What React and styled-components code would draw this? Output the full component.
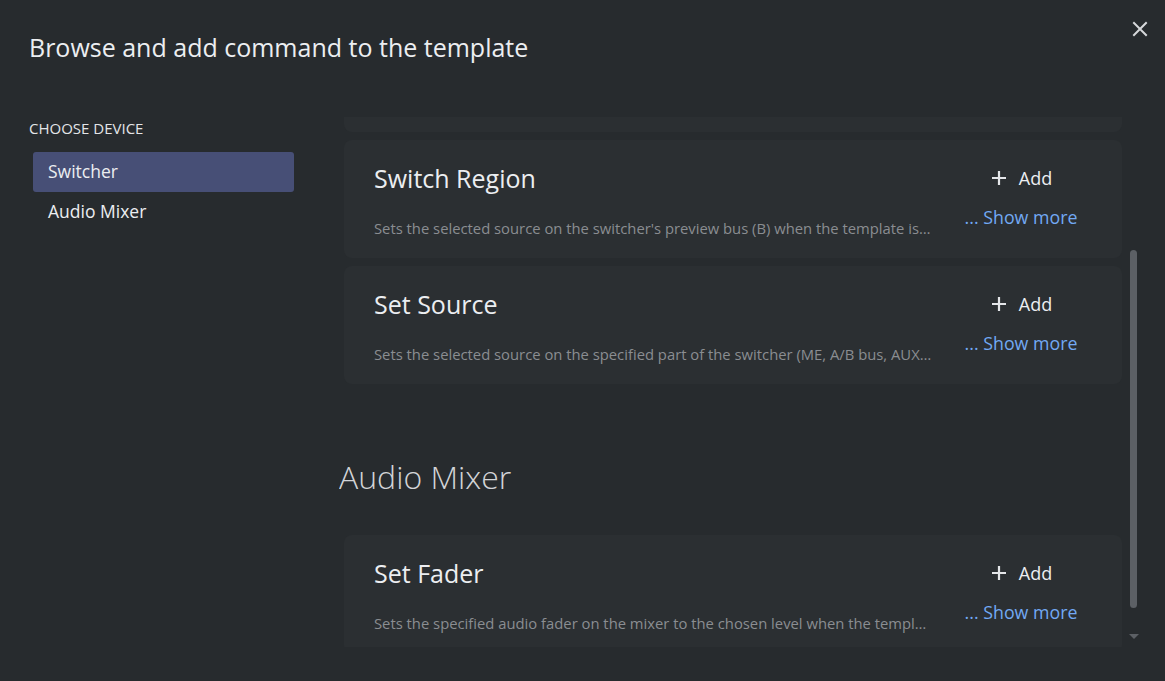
import React from "react";
import styled, { createGlobalStyle } from "styled-components";

const GlobalStyle = createGlobalStyle`
  html, body {
    margin: 0;
    padding: 0;
    background: #272b2e;
  }
  * {
    box-sizing: border-box;
  }
`;

// first switcher entry is scrolled out of view, only its bottom edge shows
const commands = {
  Switcher: [
    { title: "", desc: "" },
    {
      title: "Switch Region",
      desc: "Sets the selected source on the switcher's preview bus (B) when the template is triggered and then performs a cut."
    },
    {
      title: "Set Source",
      desc: "Sets the selected source on the specified part of the switcher (ME, A/B bus, AUX, DSK) when the template is triggered."
    }
  ],
  "Audio Mixer": [
    {
      title: "Set Fader",
      desc: "Sets the specified audio fader on the mixer to the chosen level when the template is triggered."
    }
  ]
};

class App extends React.Component {
  state = {
    device: "Switcher"
  };

  selectDevice = device => {
    this.setState({ device });
  };

  render() {
    return (
      <Modal>
        <GlobalStyle />
        <Header>
          <Title>Browse and add command to the template</Title>
          <CloseButton aria-label="Close">
            <svg width="16" height="16" viewBox="0 0 16 16">
              <path
                d="M2 2 L14 14 M14 2 L2 14"
                stroke="#d6d8db"
                strokeWidth="2"
                strokeLinecap="square"
              />
            </svg>
          </CloseButton>
        </Header>
        <Body>
          <Sidebar>
            <SidebarLabel>Choose device</SidebarLabel>
            <DeviceList>
              {Object.keys(commands).map(name => (
                <DeviceItem
                  key={name}
                  $active={this.state.device === name}
                  onClick={() => this.selectDevice(name)}
                >
                  {name}
                </DeviceItem>
              ))}
            </DeviceList>
          </Sidebar>
          <Main>
            <Viewport>
              <ScrollContent>
                {commands.Switcher.map((cmd, i) => (
                  <CommandCard key={i} {...cmd} />
                ))}
                <SectionHeading>Audio Mixer</SectionHeading>
                {commands["Audio Mixer"].map((cmd, i) => (
                  <CommandCard key={i} {...cmd} />
                ))}
              </ScrollContent>
            </Viewport>
            <ScrollTrack>
              <Thumb />
              <DownArrow />
            </ScrollTrack>
          </Main>
        </Body>
      </Modal>
    );
  }
}

const CommandCard = ({ title, desc }) => {
  if (!title) return <Card />;
  return (
    <Card>
      <CardText>
        <CardTitle>{title}</CardTitle>
        <CardDesc>{desc}</CardDesc>
      </CardText>
      <CardActions>
        <AddButton>
          <svg width="18" height="18" viewBox="0 0 18 18">
            <path
              d="M9 2 V16 M2 9 H16"
              stroke="#e4e6e9"
              strokeWidth="2.2"
            />
          </svg>
          <span>Add</span>
        </AddButton>
        <ShowMore>... Show more</ShowMore>
      </CardActions>
    </Card>
  );
};

export default App;

const Modal = styled.div`
  width: 1165px;
  height: 681px;
  overflow: hidden;
  background: #272b2e;
  font-family: "Open Sans", "Noto Sans", sans-serif;
  color: #e8eaed;
`;

const Header = styled.div`
  display: flex;
  justify-content: space-between;
  align-items: flex-start;
  padding: 0 17px 0 29px;
`;

const Title = styled.h1`
  margin: 30px 0 0;
  font-size: 25px;
  font-weight: 400;
  line-height: 34px;
  color: #eceef1;
`;

const CloseButton = styled.button`
  margin-top: 21px;
  padding: 0;
  border: 0;
  background: none;
  width: 16px;
  height: 16px;
  cursor: pointer;
  display: flex;
`;

const Body = styled.div`
  display: flex;
  margin-top: 53px;
`;

const Sidebar = styled.div`
  width: 339px;
  flex-shrink: 0;
  padding: 1px 45px 0 29px;
`;

const SidebarLabel = styled.div`
  font-size: 15px;
  line-height: 20px;
  text-transform: uppercase;
  color: #e3e5e8;
`;

const DeviceList = styled.div`
  display: flex;
  flex-direction: column;
  margin: 14px 0 0 4px;
`;

const DeviceItem = styled.div`
  height: 40px;
  display: flex;
  align-items: center;
  padding: 0 0 2px 15px;
  border-radius: 3px;
  font-size: 17.5px;
  color: #eceef1;
  background: ${p => (p.$active ? "#474f76" : "transparent")};
  cursor: pointer;
`;

const Main = styled.div`
  display: flex;
  flex: 1;
`;

const Viewport = styled.div`
  width: 784px;
  height: 530px;
  overflow: hidden;
`;

const ScrollContent = styled.div`
  margin-top: -103px;
  display: flex;
  flex-direction: column;
`;

const Card = styled.div`
  display: flex;
  align-items: flex-start;
  flex-shrink: 0;
  height: 118px;
  margin: 0 1px 8px 5px;
  padding: 22px 44px 0 30px;
  border-radius: 8px;
  background: #2b2f32;
`;

const CardText = styled.div`
  flex: 1;
  min-width: 0;
  display: flex;
  flex-direction: column;
`;

const CardTitle = styled.div`
  font-size: 25px;
  line-height: 32px;
  color: #eceef1;
`;

const CardDesc = styled.div`
  margin-top: 24px;
  font-size: 14.8px;
  line-height: 20px;
  color: #8a8d91;
  white-space: nowrap;
  overflow: hidden;
  text-overflow: ellipsis;
`;

const CardActions = styled.div`
  width: 114px;
  margin-left: 32px;
  display: flex;
  flex-direction: column;
  align-items: center;
`;

const AddButton = styled.button`
  display: flex;
  align-items: center;
  gap: 11px;
  height: 32px;
  padding: 0;
  border: 0;
  background: none;
  font-family: inherit;
  font-size: 18px;
  line-height: 24px;
  color: #eceef1;
  cursor: pointer;
`;

const ShowMore = styled.div`
  margin-top: 11px;
  font-size: 17.8px;
  line-height: 24px;
  color: #72a9f4;
  white-space: nowrap;
  cursor: pointer;
`;

const SectionHeading = styled.h2`
  margin: 63px 0 36px;
  font-size: 32px;
  font-weight: 300;
  line-height: 44px;
  color: #d2d4d7;
`;

const ScrollTrack = styled.div`
  width: 7px;
  margin-left: 7px;
  display: flex;
  flex-direction: column;
  align-items: center;
`;

const Thumb = styled.div`
  width: 7px;
  height: 358px;
  margin-top: 133px;
  border-radius: 4px;
  background: #5c6065;
`;

const DownArrow = styled.div`
  margin-top: 26px;
  width: 0;
  height: 0;
  border-left: 5px solid transparent;
  border-right: 5px solid transparent;
  border-top: 5px solid #5c6065;
`;
